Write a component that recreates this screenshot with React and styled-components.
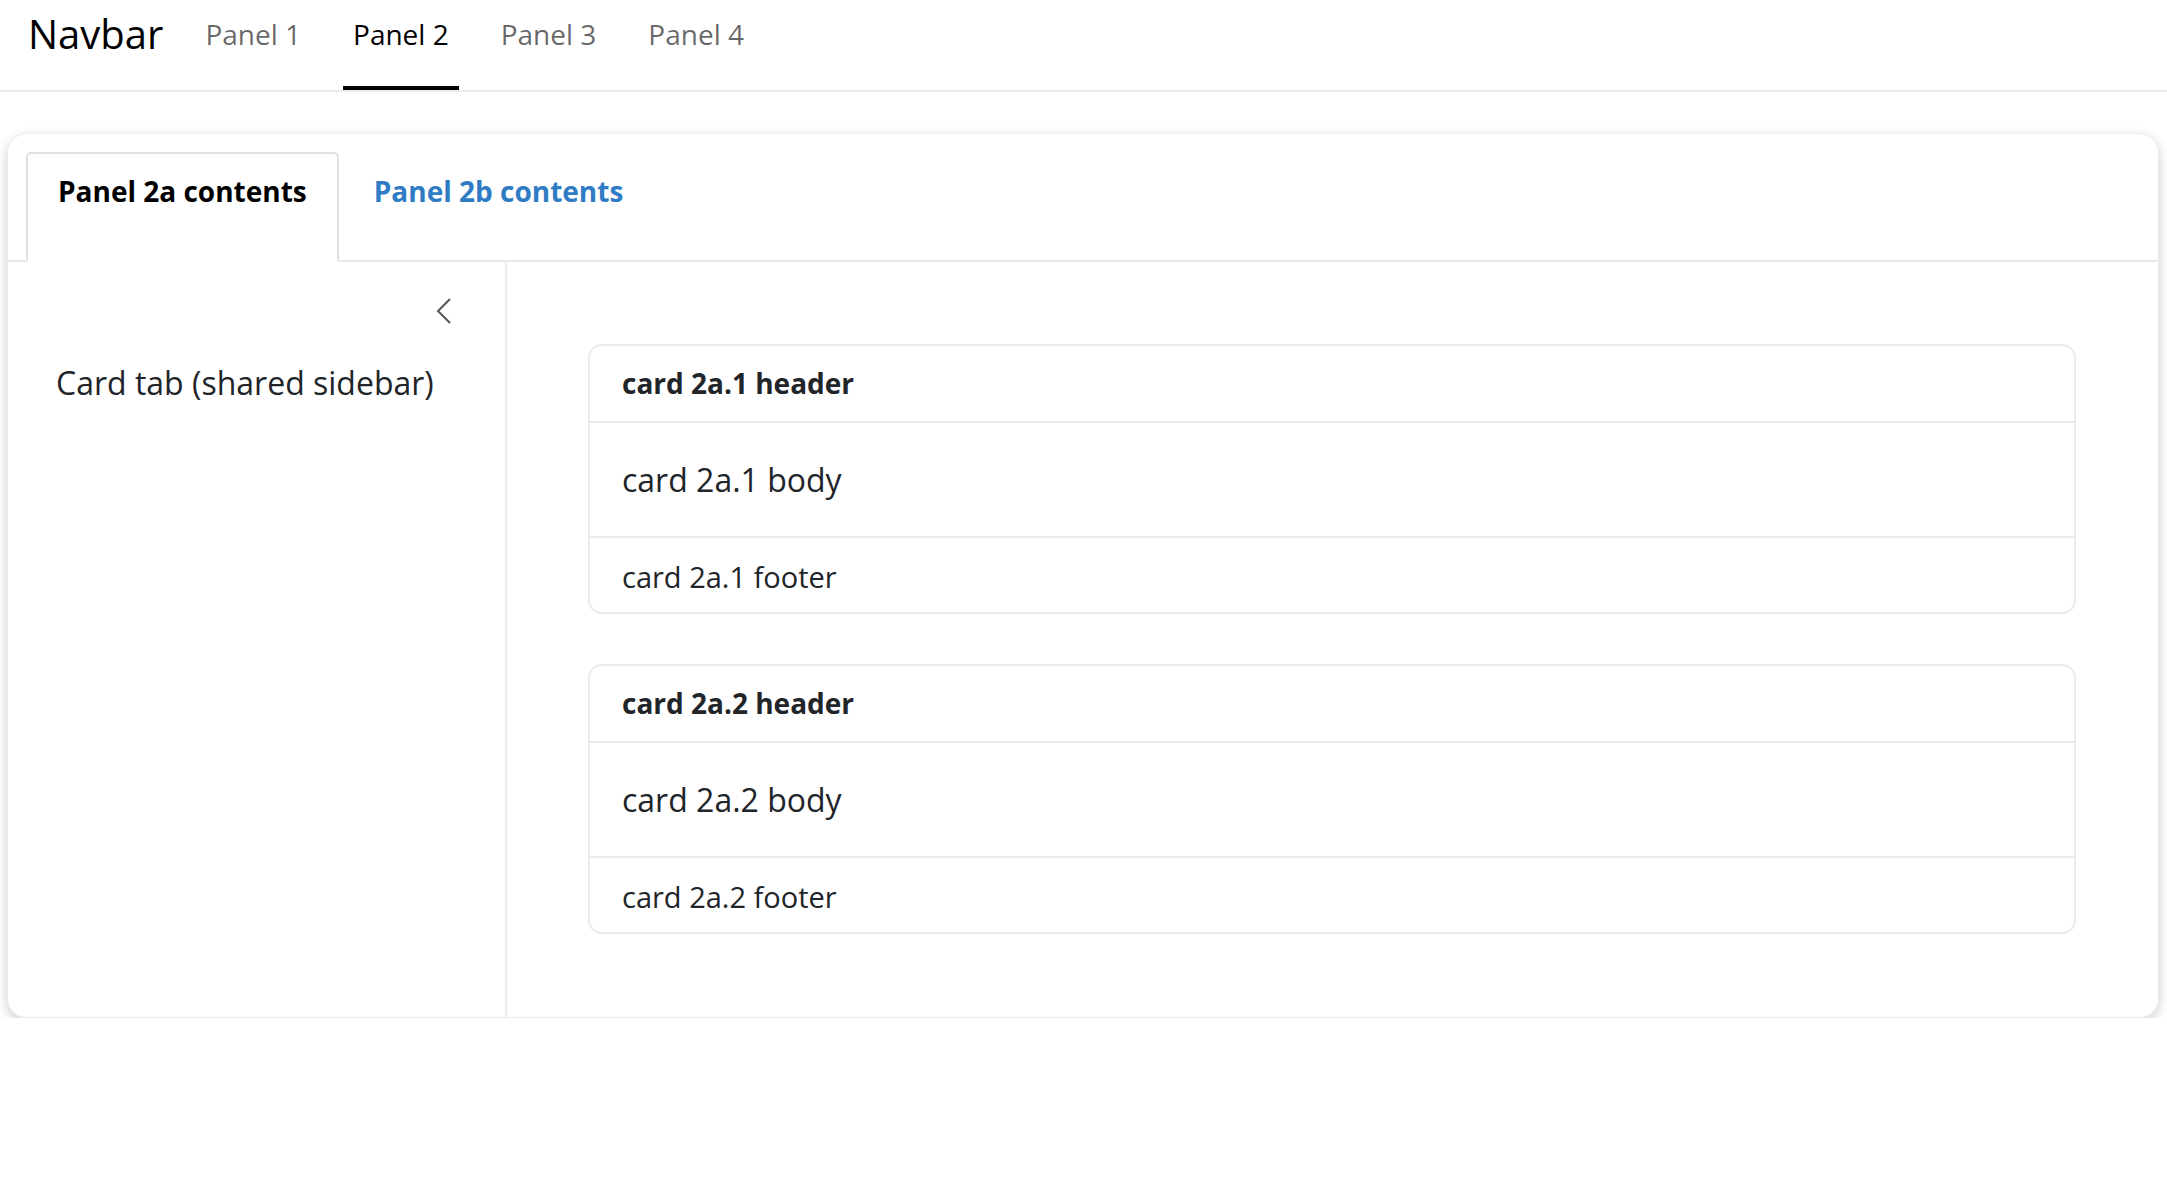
import React from "react";
import styled, { createGlobalStyle } from "styled-components";

const GlobalStyle = createGlobalStyle`
  body {
    margin: 0;
    background: #fff;
    font-family: "Open Sans", "Noto Sans", sans-serif;
    color: #212529;
  }
`;

const NavBar = styled.nav`
  display: flex;
  align-items: stretch;
  gap: 32px;
  height: 92px;
  box-sizing: border-box;
  padding-left: 28px;
  border-bottom: 2px solid #ebebeb;
`;

const Brand = styled.div`
  font-size: 40px;
  line-height: 56px;
  padding-top: 6px;
  color: #000;
`;

const NavLink = styled.a`
  display: block;
  box-sizing: border-box;
  height: 90px;
  padding: 13px 10px 0;
  font-size: 28px;
  line-height: 42px;
  color: ${(p) => (p.active ? "#000" : "rgba(0, 0, 0, 0.6)")};
  border-bottom: 4px solid ${(p) => (p.active ? "#000" : "transparent")};
  text-decoration: none;
  cursor: pointer;
`;

const Panel = styled.section`
  margin: 41px 8px 0 7px;
  border: 1px solid #ececec;
  border-radius: 20px;
  box-shadow: 0 4px 12px rgba(0, 0, 0, 0.2);
  overflow: hidden;
`;

const TabBar = styled.div`
  display: flex;
  gap: 3px;
  padding: 18px 18px 0;
  border-bottom: 2px solid #e9e9e9;
`;

const Tab = styled.div`
  box-sizing: border-box;
  height: 110px;
  margin-bottom: -2px;
  padding: 16px 30px 0;
  font-size: 28px;
  font-weight: 700;
  line-height: 42px;
  color: ${(p) => (p.active ? "#000" : "#2f7cc5")};
  background: ${(p) => (p.active ? "#fff" : "transparent")};
  border: 2px solid ${(p) => (p.active ? "#dee2e6" : "transparent")};
  border-bottom-color: ${(p) => (p.active ? "#fff" : "transparent")};
  border-radius: 5px 5px 0 0;
  cursor: pointer;
`;

const Body = styled.div`
  display: flex;
`;

const Sidebar = styled.aside`
  width: 499px;
  flex-shrink: 0;
  box-sizing: border-box;
  padding: 34px 53px 0 48px;
  border-right: 2px solid #ececec;
`;

const CollapseRow = styled.div`
  display: flex;
  justify-content: flex-end;
  height: 30px;
  align-items: center;
`;

const SidebarText = styled.div`
  margin-top: 33px;
  font-size: 32px;
  line-height: 48px;
  color: #212529;
`;

const Content = styled.div`
  flex: 1;
  display: flex;
  flex-direction: column;
  gap: 50px;
  padding: 82px 82px 83px 81px;
`;

const Card = styled.div`
  border: 2px solid #ebebeb;
  border-radius: 14px;
  overflow: hidden;
`;

const CardSection = styled.div`
  padding: ${(p) => p.pad};
  padding-left: 32px;
  font-size: ${(p) => p.size};
  line-height: ${(p) => (p.big ? "48px" : "42px")};
  font-weight: ${(p) => (p.bold ? 700 : 400)};
  color: #212529;
  & + & {
    border-top: 2px solid #ebebeb;
  }
`;

function Chevron() {
  return (
    <svg width="16" height="28" viewBox="0 0 16 28">
      <polyline
        points="14,2 2,14 14,26"
        fill="none"
        stroke="#555"
        strokeWidth="2"
      />
    </svg>
  );
}

const cards = ["2a.1", "2a.2"];

export default function App() {
  return (
    <>
      <GlobalStyle />
      <NavBar>
        <Brand>Navbar</Brand>
        <NavLink>Panel 1</NavLink>
        <NavLink active>Panel 2</NavLink>
        <NavLink>Panel 3</NavLink>
        <NavLink>Panel 4</NavLink>
      </NavBar>
      <Panel>
        <TabBar>
          <Tab active>Panel 2a contents</Tab>
          <Tab>Panel 2b contents</Tab>
        </TabBar>
        <Body>
          <Sidebar>
            <CollapseRow>
              <Chevron />
            </CollapseRow>
            <SidebarText>Card tab (shared sidebar)</SidebarText>
          </Sidebar>
          <Content>
            {cards.map((id) => (
              <Card key={id}>
                <CardSection bold size="28px" pad="16px 0 17px">
                  card {id} header
                </CardSection>
                <CardSection big size="32px" pad="33px 0 32px">
                  card {id} body
                </CardSection>
                <CardSection size="29px" pad="18px 0 14px">
                  card {id} footer
                </CardSection>
              </Card>
            ))}
          </Content>
        </Body>
      </Panel>
    </>
  );
}
